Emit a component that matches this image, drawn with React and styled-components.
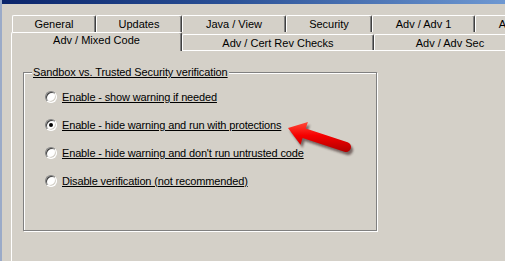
import React from "react";
import styled, { createGlobalStyle } from "styled-components";

const GlobalStyle = createGlobalStyle`
  body {
    margin: 0;
    background: #d4d0c8;
  }
`;

const topTabs = [
  { label: "General", w: 84 },
  { label: "Updates", w: 86 },
  { label: "Java / View", w: 104 },
  { label: "Security", w: 86 },
  { label: "Adv / Adv 1", w: 103 },
  { label: "Adv / Adv 2", w: 103 },
];

const bottomTabs = [
  { label: "Adv / Mixed Code", w: 171, active: true },
  { label: "Adv / Cert Rev Checks", w: 192 },
  { label: "Adv / Adv Sec", w: 152 },
];

const options = [
  { label: "Enable - show warning if needed" },
  { label: "Enable - hide warning and run with protections", checked: true },
  { label: "Enable - hide warning and don't run untrusted code" },
  { label: "Disable verification (not recommended)" },
];

const arrowPath =
  "M286 128 L305.9 121.9 L303.8 128.5 L345.6 142.2 A5 5 0 0 1 342.4 151.8 L300.6 138.1 L298.5 144.7 Z";

const RedArrow = () => (
  <ArrowSvg width="80" height="50" viewBox="0 0 80 50">
    <defs>
      <linearGradient id="redFill" x1="0" y1="0" x2="0" y2="1">
        <stop offset="0" stopColor="#ff4a3a" />
        <stop offset="0.45" stopColor="#f60000" />
        <stop offset="1" stopColor="#b00000" />
      </linearGradient>
      <filter id="blur" x="-20%" y="-20%" width="140%" height="140%">
        <feGaussianBlur stdDeviation="1.3" />
      </filter>
    </defs>
    <g transform="translate(-278 -116)">
      <path
        d={arrowPath}
        fill="#3a2020"
        opacity="0.6"
        filter="url(#blur)"
        transform="translate(2 3)"
      />
      <path d={arrowPath} fill="url(#redFill)" />
    </g>
  </ArrowSvg>
);

const App = () => {
  return (
    <>
      <GlobalStyle />
      <Window>
        <TitleStrip />
        <Body>
          <TabRow $indent={1}>
            {topTabs.map((t) => (
              <Tab key={t.label} $w={t.w}>
                {t.label}
              </Tab>
            ))}
          </TabRow>
          <TabRow $indent={0}>
            {bottomTabs.map((t) => (
              <Tab key={t.label} $w={t.w} $active={t.active} $front>
                {t.label}
              </Tab>
            ))}
          </TabRow>
          <Panel>
            <GroupBox>
              <Legend>Sandbox vs. Trusted Security verification</Legend>
              {options.map((o) => (
                <Option key={o.label}>
                  <Radio $checked={o.checked} />
                  <Label>{o.label}</Label>
                </Option>
              ))}
            </GroupBox>
          </Panel>
        </Body>
        <RedArrow />
      </Window>
    </>
  );
};

const Window = styled.div`
  position: relative;
  width: 505px;
  height: 261px;
  box-sizing: border-box;
  overflow: hidden;
  display: flex;
  flex-direction: column;
  background: #d4d0c8;
  border-left: 2px solid #9aaac8;
  font-family: "Liberation Sans", Arial, sans-serif;
  font-size: 11px;
  color: #000;
`;

const TitleStrip = styled.div`
  height: 4px;
  margin-left: -2px;
  background: linear-gradient(90deg, #0a246a 0%, #2a5096 45%, #6e98d2 100%);
`;

const Body = styled.div`
  flex: 1;
  display: flex;
  flex-direction: column;
  padding: 11px 0 0 9px;
`;

const TabRow = styled.div`
  display: flex;
  height: ${(p) => (p.$indent ? 17 : 18)}px;
  padding-left: ${(p) => p.$indent}px;
  align-items: flex-start;
`;

const Tab = styled.div`
  position: relative;
  flex: 0 0 ${(p) => p.$w}px;
  box-sizing: border-box;
  height: ${(p) => (p.$active ? 19 : p.$front ? 16 : 17)}px;
  margin-top: ${(p) => (p.$front && !p.$active ? 2 : 0)}px;
  z-index: ${(p) => (p.$active ? 2 : 0)};
  background: #d4d0c8;
  border-top: 1px solid #fff;
  border-left: 1px solid #fff;
  border-right: 1px solid #404040;
  border-top-left-radius: 2px;
  border-top-right-radius: 2px;
  box-shadow: inset -1px 0 0 #808080;
  display: flex;
  justify-content: center;
  padding-top: ${(p) => (p.$active ? 1 : 2)}px;
  white-space: nowrap;
  overflow: hidden;
`;

const Panel = styled.div`
  flex: 1;
  border-top: 1px solid #fff;
  border-left: 1px solid #fff;
  padding: 15px 0 0 11px;
`;

const GroupBox = styled.fieldset`
  width: 354px;
  height: 165px;
  box-sizing: border-box;
  margin: 0;
  padding: 4px 0 0 21px;
  border: 1px solid #808080;
  box-shadow: 1px 1px 0 #fff, inset 1px 1px 0 #fff;
`;

const Legend = styled.legend`
  margin-left: -13px;
  padding: 0 1px;
  background: #d4d0c8;
  line-height: 13px;
  letter-spacing: -0.1px;
  text-decoration: underline;
`;

const Option = styled.div`
  display: flex;
  align-items: center;
  gap: 5px;
  height: 28px;
`;

const Radio = styled.span`
  width: 12px;
  height: 12px;
  box-sizing: border-box;
  border-radius: 50%;
  background: #fff;
  border: 1px solid;
  border-color: #808080 #fff #fff #808080;
  box-shadow: inset 1px 1px 0 #404040, inset -1px -1px 0 #d4d0c8;
  display: flex;
  align-items: center;
  justify-content: center;

  &::after {
    content: "";
    display: ${(p) => (p.$checked ? "block" : "none")};
    width: 4px;
    height: 4px;
    border-radius: 50%;
    background: #000;
  }
`;

const Label = styled.span`
  text-decoration: underline;
  letter-spacing: -0.15px;
  white-space: nowrap;
`;

const ArrowSvg = styled.svg`
  position: absolute;
  left: 278px;
  top: 116px;
  overflow: visible;
`;

export default App;
